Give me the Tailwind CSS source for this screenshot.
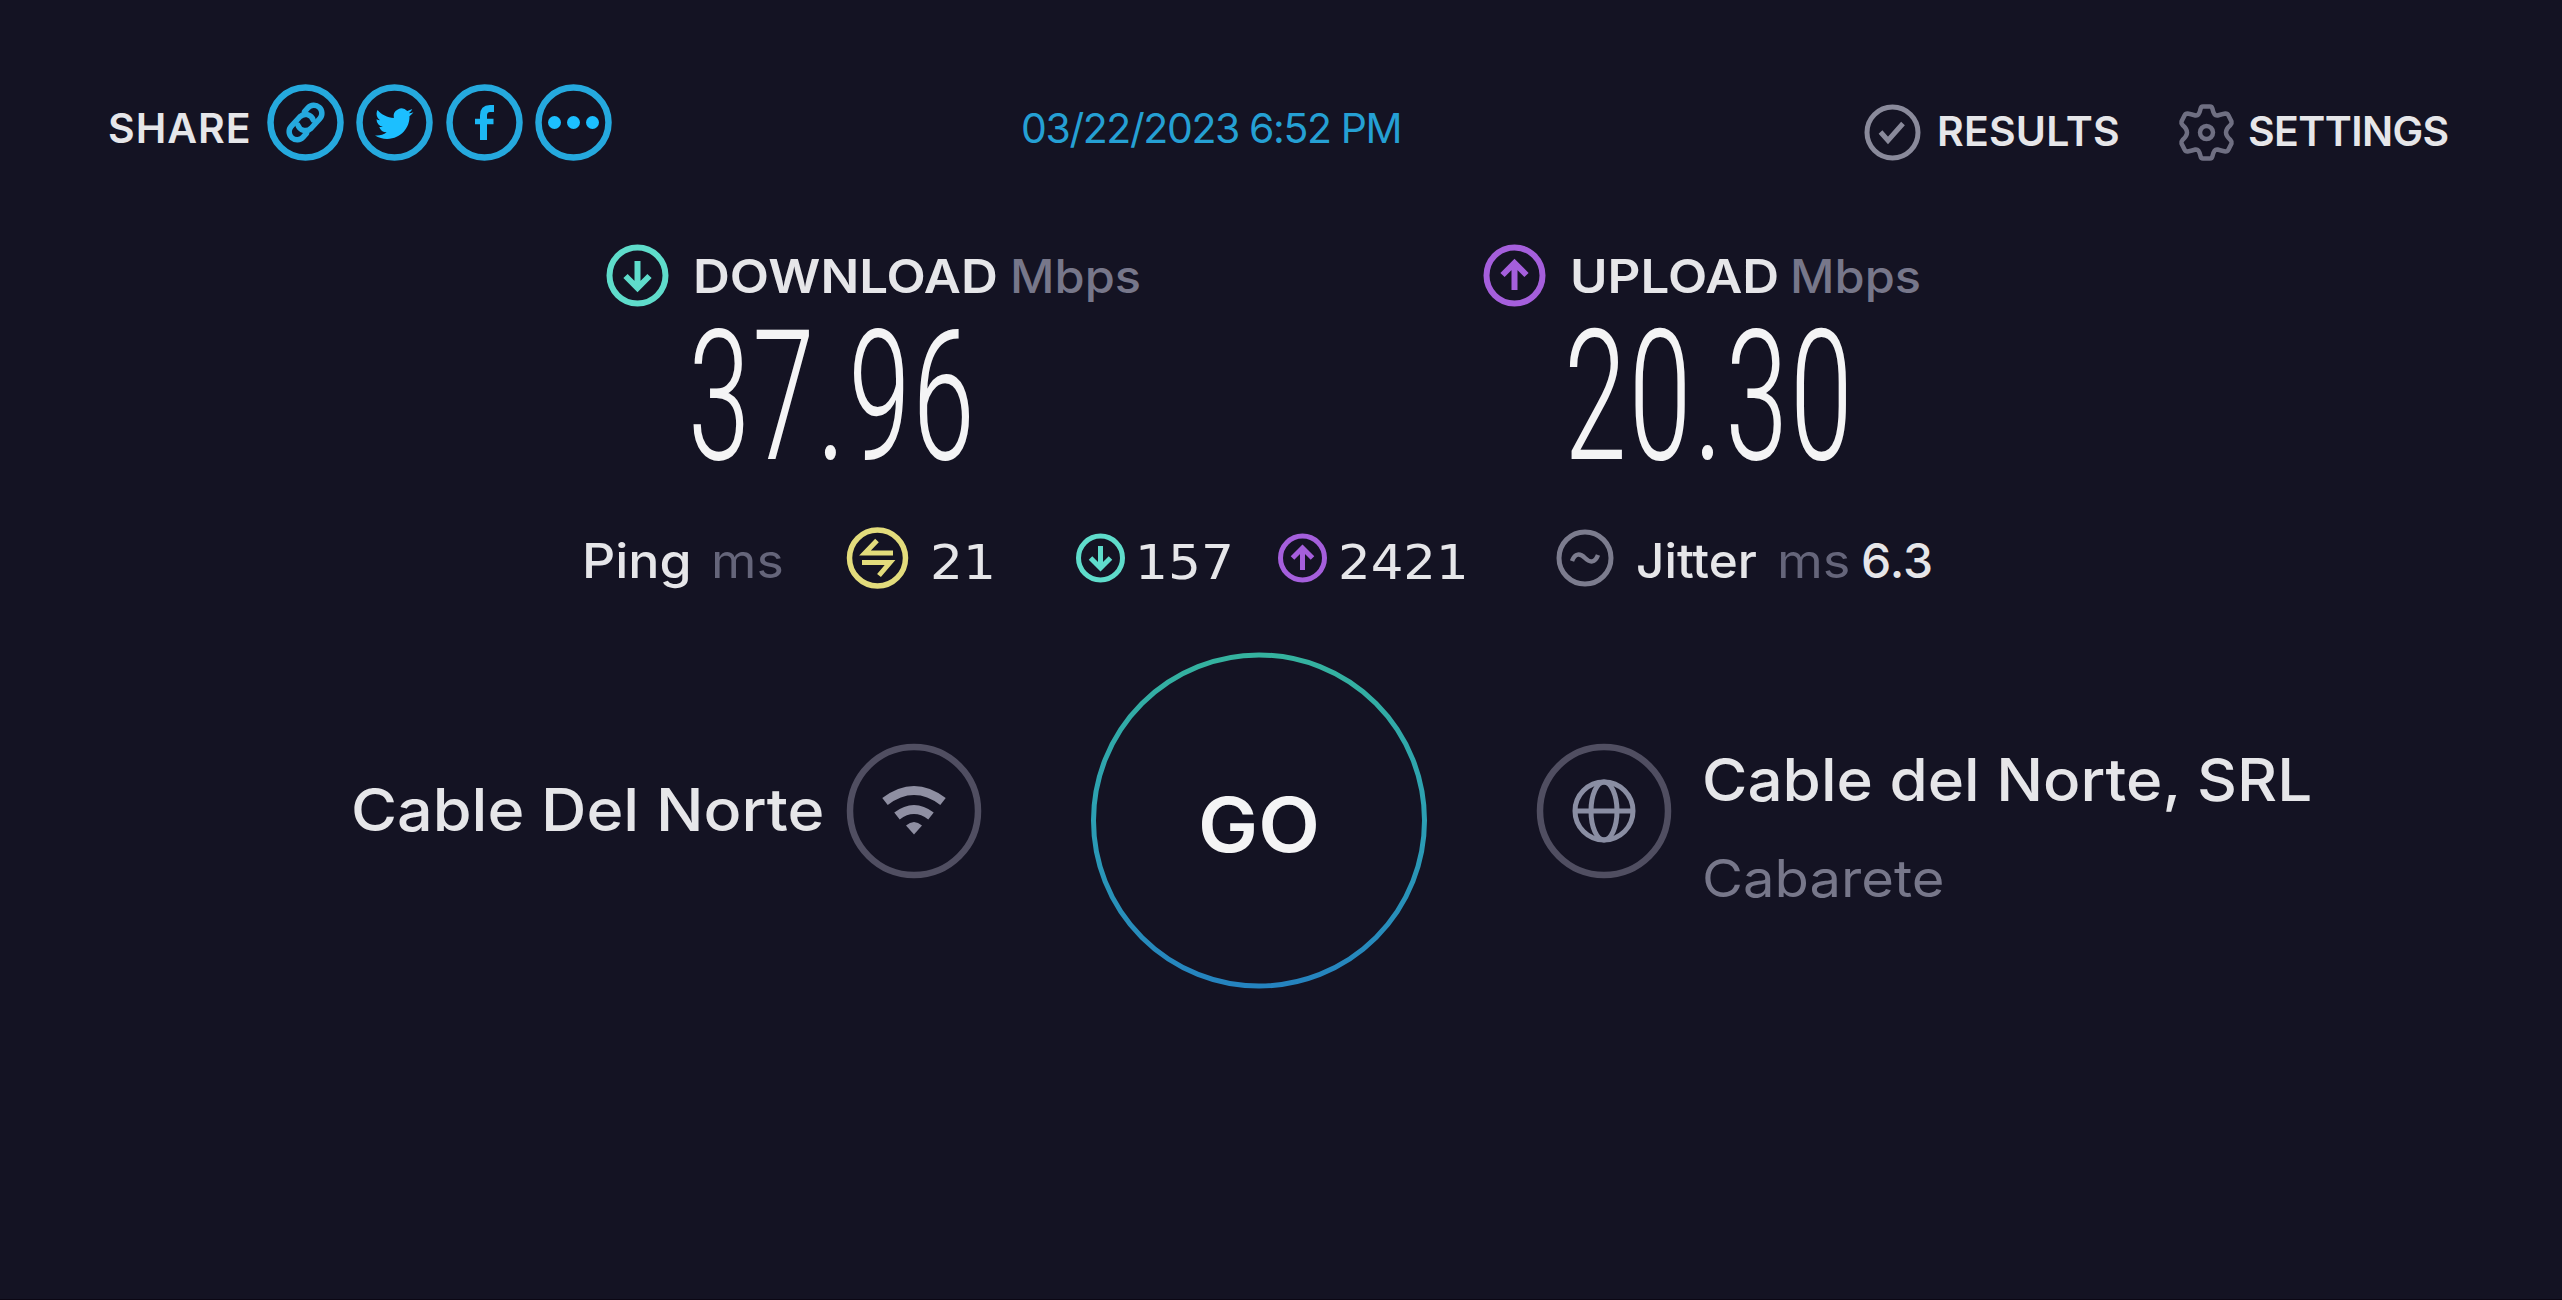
<!DOCTYPE html>
<html lang="en">
<head>
    <meta charset="utf-8">
    <meta name="viewport" content="width=device-width, initial-scale=1">
    <title>Speedtest</title>
    <script src="https://cdn.jsdelivr.net/npm/@tailwindcss/browser@4"></script>
</head>
<body class="h-screen overflow-hidden bg-[#141323] border-b border-[#0b0714] font-[Inter,sans-serif] text-[#e6e6e9] leading-none whitespace-nowrap">

    <!-- Top bar -->
    <header class="flex items-start h-[160px] pt-[84px] pl-[108px]">
        <div class="flex items-start w-[913px]">
            <span class="w-[158.5px] mt-[24px] text-[41px] font-semibold tracking-[1px]">SHARE</span>
            <div class="flex gap-[12.6px] text-[#1cb8f5]">
                <svg class="size-[77px]" viewBox="0 0 77 77" fill="none" stroke="currentColor">
                    <circle cx="38.5" cy="38.5" r="35" stroke="#25a9de" stroke-width="6.5"/>
                    <g transform="rotate(-48 38.5 38.5)" stroke="#25a9de" stroke-width="5.5" stroke-linecap="round">
                        <path d="M31 46.500h-5a8 8 0 0 1 0-16h13a8 8 0 0 1 6.500 12"/>
                        <path d="M46 30.500h5a8 8 0 0 1 0 16H38a8 8 0 0 1-6.500-12"/>
                    </g>
                </svg>
                <svg class="size-[77px]" viewBox="0 0 77 77" fill="none">
                    <circle cx="38.5" cy="38.5" r="35" stroke="#25a9de" stroke-width="6.5"/>
                    <path transform="translate(19 21) scale(1.600 1.560)" fill="#1cbfff" d="M23.953 4.570a10 10 0 0 1-2.825.775 4.958 4.958 0 0 0 2.163-2.723c-.951.555-2.005.959-3.127 1.184a4.920 4.920 0 0 0-8.384 4.482C7.690 8.095 4.067 6.130 1.640 3.162a4.822 4.822 0 0 0-.666 2.475c0 1.710.870 3.213 2.188 4.096a4.904 4.904 0 0 1-2.228-.616v.060a4.923 4.923 0 0 0 3.946 4.827 4.996 4.996 0 0 1-2.212.085 4.936 4.936 0 0 0 4.604 3.417 9.867 9.867 0 0 1-6.102 2.105c-.390 0-.779-.023-1.170-.067a13.995 13.995 0 0 0 7.557 2.209c9.053 0 13.998-7.496 13.998-13.985 0-.210 0-.420-.015-.630A9.935 9.935 0 0 0 24 4.590z"/>
                </svg>
                <svg class="size-[77px]" viewBox="0 0 77 77" fill="none" stroke="currentColor">
                    <circle cx="38.5" cy="38.5" r="35" stroke="#25a9de" stroke-width="6.5"/>
                    <path d="M37.500 56V31.500c0-5 2.500-7 6.500-7h4" stroke-width="7"/>
                    <path d="M29 37.500h18.500" stroke-width="5.500"/>
                </svg>
                <svg class="size-[77px]" viewBox="0 0 77 77" fill="#1cbfff">
                    <circle cx="38.5" cy="38.5" r="35" fill="none" stroke="#25a9de" stroke-width="6.5"/>
                    <circle cx="19.500" cy="38.500" r="6.500"/>
                    <circle cx="38.500" cy="38.500" r="6.500"/>
                    <circle cx="57.500" cy="38.500" r="6.500"/>
                </svg>
            </div>
        </div>
        <span class="w-[843px] mt-[24px] text-[41px] text-[#25a0d4] tracking-[-1.4px]">03/22/2023 6:52 PM</span>
        <a class="flex items-start w-[314px] mt-[20px]">
            <svg class="size-[57px]" viewBox="0 0 57 57" fill="none" stroke="#8a8a9b">
                <circle cx="28.500" cy="28.500" r="25.500" stroke-width="5"/>
                <path d="M16.500 28l7.500 8.500L39 19.500" stroke-width="5"/>
            </svg>
            <span class="ml-[16px] mt-[6.500px] text-[41px] font-semibold tracking-[.2px]">RESULTS</span>
        </a>
        <a class="flex items-start mt-[20px]">
            <svg class="size-[57px]" viewBox="0 0 57 57" fill="none" stroke="#6f6f82" stroke-width="4.500" stroke-linejoin="round">
                <path d="M25 2.500h7q2 0 2.500 2.500 1.500 7 5 6.500 5-1.500 8-2 2 0 3 2l3 6q.500 2-1 3.500-4.500 4-4.500 7.500t4.500 7.500q1.500 1.500 1 3.500l-3 6q-1 2-3 2-3-.500-8-2-3.500-.500-5 6.500-.500 2.500-2.500 2.500h-7q-2 0-2.500-2.500-1.500-7-5-6.500-5 1.500-8 2-2 0-3-2l-3-6q-.500-2 1-3.500 4.500-4 4.500-7.500t-4.500-7.500q-1.500-1.500-1-3.500l3-6q1-2 3-2 3 .500 8 2 3.500.500 5-6.500.500-2.500 2.500-2.500z"/>
                <circle cx="28.500" cy="28.500" r="6.500"/>
            </svg>
            <span class="ml-[13px] mt-[6.500px] text-[41px] font-semibold tracking-[-.6px]">SETTINGS</span>
        </a>
    </header>

    <!-- Download / upload -->
    <section class="flex pt-[84px] pl-[606px]">
        <div class="w-[877px]">
            <div class="flex items-center h-[63px]">
                <svg class="size-[63px]" viewBox="0 0 63 63" fill="none" stroke="#5fdccb">
                    <circle cx="31.500" cy="31.500" r="28" stroke-width="6"/>
                    <path d="M31.500 17v27M19.500 32l12 12 12-12" stroke-width="6"/>
                </svg>
                <span class="w-[317px] ml-[24px] text-[46px] font-semibold"><span class="inline-block origin-left scale-x-[1.110]">DOWNLOAD</span></span>
                <span class="text-[46px] font-medium text-[#77778a] origin-left scale-x-[1.060]">Mbps</span>
            </div>
            <div class="ml-[81px] w-max h-[180px] leading-[180px] text-[181px] font-[Roboto,sans-serif] font-light text-[#f4f4f5] [font-stretch:75%] origin-left scale-x-[.730]">37.96</div>
        </div>
        <div>
            <div class="flex items-center h-[63px]">
                <svg class="size-[63px]" viewBox="0 0 63 63" fill="none" stroke="#a55fdc">
                    <circle cx="31.500" cy="31.500" r="28" stroke-width="6"/>
                    <path d="M31.500 46V19M19.500 31l12-12 12 12" stroke-width="6"/>
                </svg>
                <span class="w-[220px] ml-[23.500px] text-[46px] font-semibold"><span class="inline-block origin-left scale-x-[1.110]">UPLOAD</span></span>
                <span class="text-[46px] font-medium text-[#77778a] origin-left scale-x-[1.060]">Mbps</span>
            </div>
            <div class="ml-[80px] w-max h-[180px] leading-[180px] text-[181px] font-[Roboto,sans-serif] font-light text-[#f4f4f5] [font-stretch:75%] origin-left scale-x-[.735]">20.30</div>
        </div>
    </section>

    <!-- Latency -->
    <section class="flex items-center h-[63px] mt-[39px] pl-[582px] text-[48px]">
        <span class="w-[128.500px] mt-[6px] font-medium"><span class="inline-block origin-left scale-x-[1.080]">Ping</span></span>
        <span class="w-[135px] mt-[6px] text-[#65657a]"><span class="inline-block origin-left scale-x-[1.080]">ms</span></span>
        <svg class="size-[63px]" viewBox="0 0 63 63" fill="none" stroke="#e3dc7c">
            <circle cx="31.500" cy="32" r="28" stroke-width="5.500"/>
            <path d="M47 27H19L31 14.500M16 36.500h28L33 49.500" stroke-width="5"/>
        </svg>
        <span class="w-[146px] ml-[21px] mt-[8px] font-[DejaVu_Sans,sans-serif]"><span class="inline-block origin-left scale-x-[1.080]">21</span></span>
        <svg class="size-[50px]" viewBox="0 0 50 50" fill="none" stroke="#5fdccb">
            <circle cx="24.500" cy="25" r="22" stroke-width="5"/>
            <path d="M24.500 13v22M14.500 25l10 10 10-10" stroke-width="5"/>
        </svg>
        <span class="w-[143px] ml-[9.500px] mt-[8px] font-[DejaVu_Sans,sans-serif]"><span class="inline-block origin-left scale-x-[1.080]">157</span></span>
        <svg class="size-[50px]" viewBox="0 0 50 50" fill="none" stroke="#a55fdc">
            <circle cx="24.500" cy="25" r="22" stroke-width="5"/>
            <path d="M24.500 37V15M14.500 25l10-10 10 10" stroke-width="5"/>
        </svg>
        <span class="w-[218px] ml-[10px] mt-[8px] font-[DejaVu_Sans,sans-serif]"><span class="inline-block origin-left scale-x-[1.070]">2421</span></span>
        <svg class="size-[58px]" viewBox="0 0 58 58" fill="none" stroke="#7c7c8e">
            <circle cx="29" cy="29" r="26" stroke-width="5"/>
            <path d="M16 32c3-8 8-8 13-3s10 5 13-3" stroke-width="4.500"/>
        </svg>
        <span class="w-[140.500px] ml-[22px] mt-[6px] font-medium"><span class="inline-block origin-left scale-x-[1.030]">Jitter</span></span>
        <span class="w-[84.500px] mt-[6px] text-[#65657a]"><span class="inline-block origin-left scale-x-[1.090]">ms</span></span>
        <span class="mt-[6px] font-medium">6.3</span>
    </section>

    <!-- Provider, start button, server -->
    <section class="flex items-start mt-[63px] pl-[351px]">
        <div class="flex items-center w-[739px] h-[136px] mt-[91px]">
            <span class="w-[494.500px] -mt-[3px] text-[59px] font-medium"><span class="inline-block origin-left scale-x-[1.065]">Cable Del Norte</span></span>
            <svg class="size-[136px]" viewBox="0 0 136 136" fill="none">
                <circle cx="68" cy="68" r="64" stroke="#504e61" stroke-width="6.500"/>
                <path d="M39 58.500q29-22 58 0" stroke="#8f8fa2" stroke-width="9"/>
                <path d="M51 73q17-13 34 0" stroke="#8f8fa2" stroke-width="9"/>
                <path d="M60 82.500q8-7 16 0L68 91.500z" fill="#8f8fa2"/>
            </svg>
        </div>
        <button class="relative size-[338px]">
            <svg class="size-full" viewBox="0 0 338 338" fill="none">
                <defs>
                    <linearGradient id="ring" x1="0" y1="0" x2="0" y2="1">
                        <stop offset="0" stop-color="#35b39f"/>
                        <stop offset=".5" stop-color="#2c9fb4"/>
                        <stop offset="1" stop-color="#2583bf"/>
                    </linearGradient>
                </defs>
                <circle cx="169" cy="168.500" r="165.500" stroke="url(#ring)" stroke-width="5"/>
            </svg>
            <span class="absolute inset-0 flex items-center justify-center pt-[7px] text-[75px] font-semibold text-[#f4f4f5]"><span class="scale-x-[1.070]">GO</span></span>
        </button>
        <div class="flex items-start ml-[108px]">
            <svg class="size-[136px] mt-[91px]" viewBox="0 0 136 136" fill="none">
                <circle cx="68" cy="68" r="64" stroke="#504e61" stroke-width="6.500"/>
                <g stroke="#8a8ea3" stroke-width="5">
                    <circle cx="68" cy="68" r="29"/>
                    <ellipse cx="68" cy="68" rx="13" ry="29"/>
                    <path d="M39 68h58"/>
                </g>
            </svg>
            <div class="mt-[98px] ml-[30px]">
                <div class="w-max text-[59px] font-medium origin-left scale-x-[1.050]">Cable del Norte, SRL</div>
                <div class="w-max mt-[44px] text-[52px] text-[#77778a] origin-left scale-x-[1.080]">Cabarete</div>
            </div>
        </div>
    </section>

</body>
</html>
